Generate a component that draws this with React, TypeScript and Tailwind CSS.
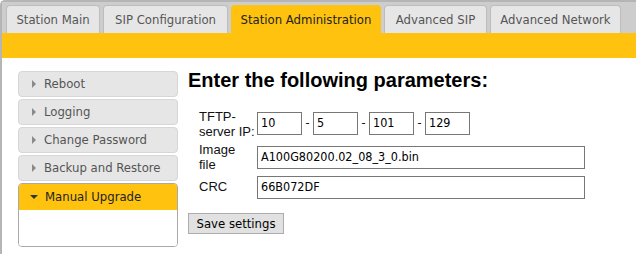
import { useState } from 'react';

const tabs = [
  { label: 'Station Main', w: 'w-[94px]' },
  { label: 'SIP Configuration', w: 'w-[125px]' },
  { label: 'Station Administration', w: 'w-[150px]' },
  { label: 'Advanced SIP', w: 'w-[103px]' },
  { label: 'Advanced Network', w: 'w-[131px]' },
];
const menu = ['Reboot', 'Logging', 'Change Password', 'Backup and Restore'];

const App = () => {
  const [active] = useState(2);

  return (
    <div className="w-[636px] h-[254px] bg-white overflow-hidden font-['DejaVu_Sans_Condensed','DejaVu_Sans',sans-serif]">
      <div className="h-full border-l-2 border-t-2 border-[#b5b5b5] rounded-tl-[5px] flex flex-col">
        {/* Tab bar */}
        <div className="bg-[#cdcdcd] pl-[4px] flex gap-[3px] items-end h-[31px]">
          {tabs.map((t, i) => (
            <div
              key={t.label}
              className={
                i === active
                  ? `${t.w} h-[29px] -mb-[1px] flex items-center justify-center whitespace-nowrap bg-[#ffc20e] text-[#222] text-[13px] rounded-t-[4px] border border-b-0 border-[#ffc20e]`
                  : `${t.w} h-[28px] flex items-center justify-center whitespace-nowrap bg-[#e6e6e6] text-[#555] text-[13px] rounded-t-[4px] border border-b-0 border-[#bdbdbd]`
              }
            >
              {t.label}
            </div>
          ))}
        </div>
        <div className="h-[25px] bg-[#ffc20e]" />

        {/* Content */}
        <div className="flex pl-[16px] pt-[13px]">
          <div className="w-[160px] flex flex-col gap-[2px]">
            {menu.map((m) => (
              <div
                key={m}
                className="h-[26px] flex items-center bg-[#e6e6e6] border border-[#d6d6d6] rounded-[4px] pl-[13px] text-[13px] text-[#555] whitespace-nowrap"
              >
                <span className="w-0 h-0 border-y-[4px] border-y-transparent border-l-[4px] border-l-[#8a8a8a] mr-[8px]" />
                {m}
              </div>
            ))}
            <div className="border border-[#a9a9a9] rounded-[4px] overflow-hidden">
              <div className="h-[26px] flex items-center bg-[#ffc20e] pl-[11px] text-[13px] text-[#222]">
                <span className="w-0 h-0 border-x-[4px] border-x-transparent border-t-[4px] border-t-[#333] mr-[7px]" />
                Manual Upgrade
              </div>
              <div className="h-[36px] bg-white" />
            </div>
          </div>

          <div className="ml-[10px] font-['Liberation_Sans',Arial,sans-serif]">
            <h1 className="text-[20px] font-bold text-black leading-[22px] -mt-[2px]">Enter the following parameters:</h1>
            <div className="mt-[14px] ml-[11px] flex flex-col text-[13px] text-[#111]">
              <div className="flex h-[41px]">
                <div className="w-[58px] leading-[15px] pt-[4px]">TFTP-<br />server IP:</div>
                <div className="flex items-start mt-[7px] font-['DejaVu_Sans_Condensed','DejaVu_Sans',sans-serif] text-[12.5px]">
                  {['10', '5', '101', '129'].map((v, i) => (
                    <div key={i} className="flex items-center">
                      {i > 0 && <span className="w-[11px] text-center">-</span>}
                      <div className="w-[45px] h-[23px] border border-[#777] px-[3px] flex items-center text-black">{v}</div>
                    </div>
                  ))}
                </div>
              </div>
              <div className="flex">
                <div className="w-[58px] h-[23px] leading-[15px] -mt-[4px]">Image<br />file</div>
                <div className="w-[328px] h-[23px] border border-[#777] px-[3px] flex items-center text-black font-['DejaVu_Sans_Condensed','DejaVu_Sans',sans-serif] text-[12.5px]">
                  A100G80200.02_08_3_0.bin
                </div>
              </div>
              <div className="flex mt-[7px]">
                <div className="w-[58px] leading-[15px] pt-[3px]">CRC</div>
                <div className="w-[328px] h-[23px] border border-[#777] px-[3px] flex items-center text-black font-['DejaVu_Sans_Condensed','DejaVu_Sans',sans-serif] text-[12.5px]">
                  66B072DF
                </div>
              </div>
            </div>
            <button className="mt-[14px] h-[21px] w-[96px] bg-[#e1e1e1] border border-[#adadad] text-[13px] text-black flex items-center justify-center font-['DejaVu_Sans_Condensed','DejaVu_Sans',sans-serif]">
              Save settings
            </button>
          </div>
        </div>
      </div>
    </div>
  );
};

export default App;
